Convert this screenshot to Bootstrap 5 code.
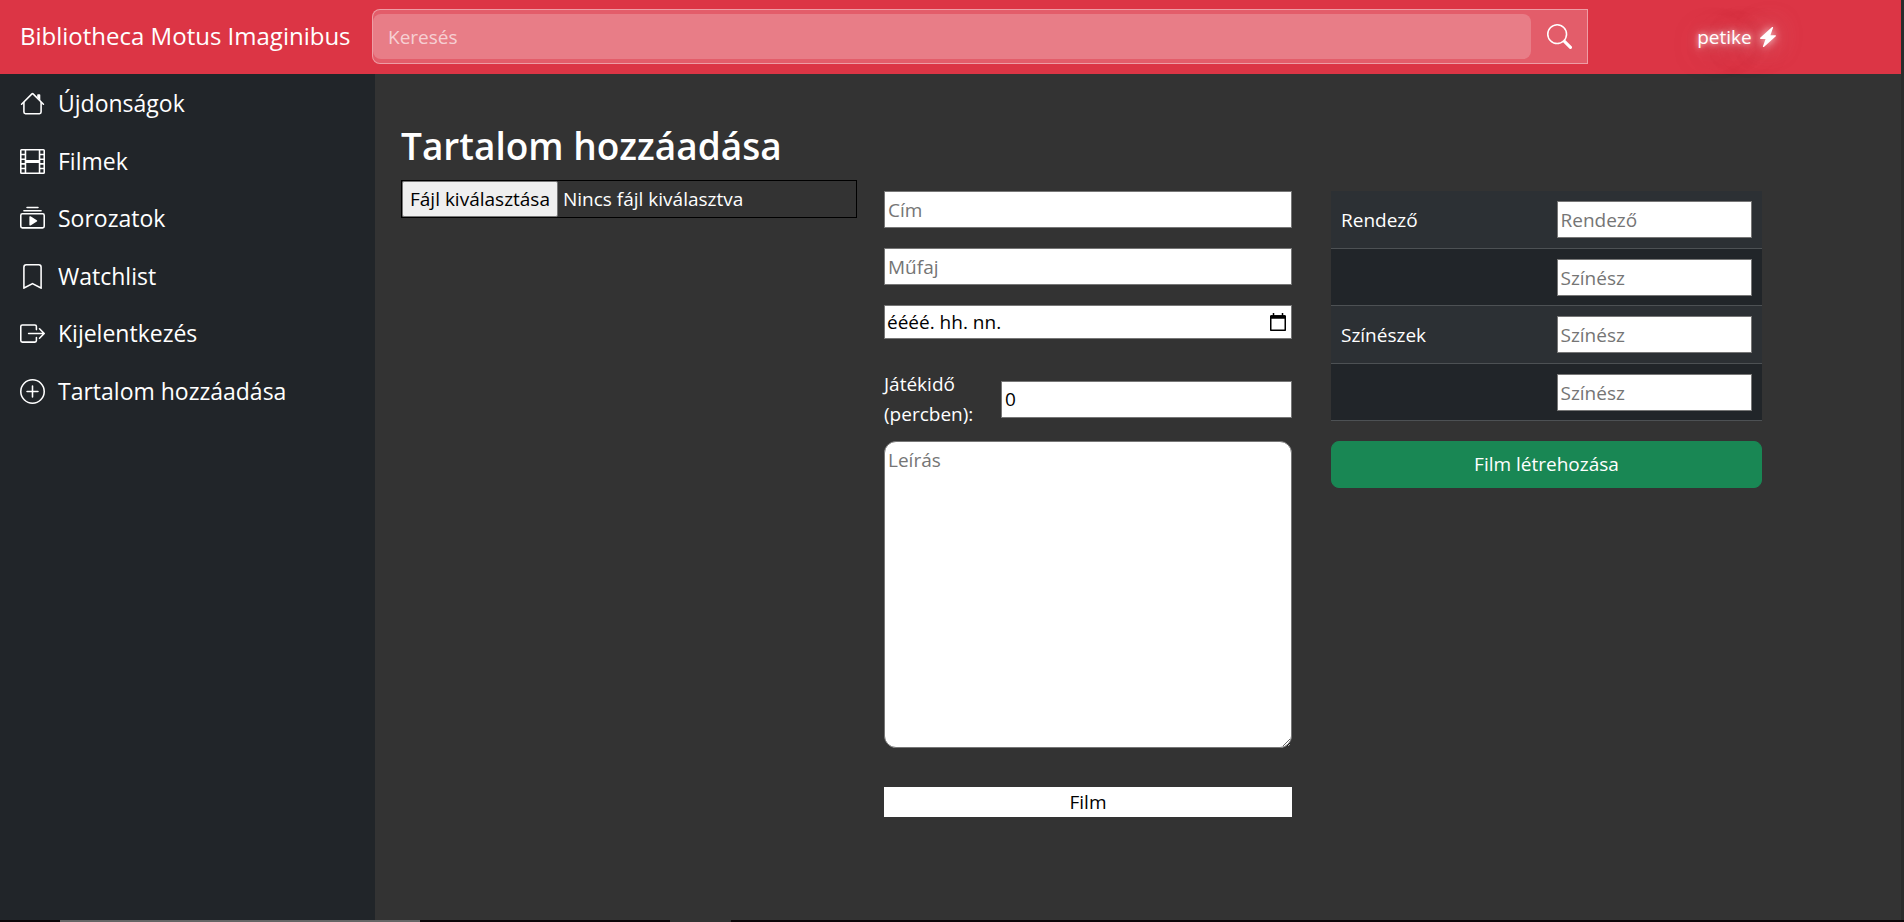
<!DOCTYPE html>
<html lang="hu">
<head>
<meta charset="utf-8">
<meta name="viewport" content="width=device-width, initial-scale=1">
<title>Bibliotheca Motus Imaginibus</title>
<link href="https://cdn.jsdelivr.net/npm/bootstrap@5.3.0/dist/css/bootstrap.min.css" rel="stylesheet">
<style>
  body { font-family: "Open Sans", "Noto Sans", sans-serif; font-size: 19px; line-height: 30px; color: #fff; background: #2b2b2b; }
  .page-shell { margin-right: 3px; background: #333; }
  .topbar { height: 74px; padding-bottom: 1px; background: #dc3545; position: relative; z-index: 2; }
  .brand-col { width: 372px; padding-left: 20px; flex: none; }
  .brand-link { font-size: 24px; color: #fff; text-decoration: none; white-space: nowrap; }
  .search-box { width: 1216px; height: 55px; padding: 4px 0; background: rgba(255,255,255,.2); border: 1px solid rgba(255,255,255,.4); border-radius: 8px 0 0 8px; flex: 0 1 auto; }
  .search-field { border: 0; border-radius: 8px; padding: 0 15px; color: #fff; background: rgba(255,255,255,.2); min-width: 0; }
  .search-field::placeholder { color: rgba(255,255,255,.65); opacity: 1; }
  .search-btn { width: 56px; border: 0; background: none; color: #fff; padding: 0; line-height: 1; }
  .user-col { padding-right: 16px; }
  .user-link { display: inline-flex; align-items: center; gap: 8px; color: #fff; text-decoration: none; text-shadow: 0 0 5px rgba(255,255,255,.7), 0 0 14px rgba(255,255,255,.6), 8px 4px 32px rgba(190,190,190,.5), 16px 16px 60px rgba(0,150,150,.3); }
  .user-link svg { filter: drop-shadow(0 0 4px rgba(255,255,255,.8)) drop-shadow(0 0 12px rgba(230,220,220,.5)); }
  .side-menu { width: 375px; flex: none; background: #212529; }
  .side-link { display: flex; align-items: center; gap: 13px; padding: 14px 20px; font-size: 23px; line-height: 30px; color: #fff; text-decoration: none; }
  .side-list li:nth-child(even) .side-link { padding-bottom: 13px; }
  .page-body { padding: 48px 139px 0 26px; }
  .page-title { font-size: 37px; font-weight: 600; line-height: 48px; margin: 0 0 10px; }
  .form-grid { display: grid; grid-template-columns: 456fr 435fr 470fr; }
  .col-mid { margin: 11px 0 0 27px; }
  .col-end { margin: 11px 0 0 39px; }
  .file-pick { height: 38px; border: 1px solid #000; cursor: pointer; }
  .file-btn { background: #efefef; color: #000; border: 1px solid #767676; border-radius: 2px; padding: 0 7px; line-height: 34px; margin-right: 5px; }
  .plain-field { display: block; width: 100%; height: 37px; border: 1px solid #767676; border-radius: 0; padding: 0 3px; background: #fff; color: #000; }
  .plain-field::placeholder { color: #757575; opacity: 1; }
  .field-stack { display: grid; gap: 20px; }
  .date-field { height: 34px; padding: 0 2px; }
  .date-field::placeholder { color: #000; }
  .date-btn { position: absolute; right: 5px; top: 7px; border: 0; background: none; padding: 0; line-height: 1; color: #000; }
  .length-row { display: grid; grid-template-columns: 117fr 291fr; align-items: center; margin: 30px 0 12px; }
  .story-field { height: 307px; border-radius: 12px; padding: 3px; }
  .kind-select { display: block; width: 100%; height: 30px; margin-top: 39px; border: 0; appearance: none; background: #fff; color: #000; text-align: center; padding: 0; }
  .cast-table { --bs-table-bg: #212529; --bs-table-striped-bg: #2c3034; margin-bottom: 20px; table-layout: fixed; color: #fff; }
  .cast-table td, .cast-table th { width: 50%; padding: 10px; font-weight: 400; vertical-align: middle; border-bottom: 1px solid #4d5154; }
  .cast-table tr:nth-child(even) > * { padding-bottom: 9px; }
  .create-btn { height: 47px; border-radius: 8px; font-size: 19px; padding: 0; }
  .edge-strip { height: 2px; margin-right: -3px; background: linear-gradient(90deg, #0b0508 60px, #666 60px 420px, #0b0508 420px 670px, #333 670px 731px, #0b0508 731px); }
</style>
</head>
<body>
<div class="page-shell d-flex flex-column min-vh-100">
  <header class="topbar d-flex align-items-center">
    <div class="brand-col"><a class="brand-link" href="#">Bibliotheca Motus Imaginibus</a></div>
    <form class="search-box d-flex" role="search">
      <input class="search-field flex-grow-1" type="search" placeholder="Keresés" aria-label="Keresés">
      <button class="search-btn" type="button" aria-label="Keresés indítása">
        <svg width="25" height="25" viewBox="0 0 16 16" fill="currentColor"><path d="M11.742 10.344a6.5 6.5 0 1 0-1.397 1.398h-.001c.03.04.062.078.098.115l3.85 3.85a1 1 0 0 0 1.415-1.414l-3.85-3.85a1.007 1.007 0 0 0-.115-.1zM12 6.5a5.5 5.5 0 1 1-11 0 5.5 5.5 0 0 1 11 0z"/></svg>
      </button>
    </form>
    <div class="user-col flex-grow-1 text-center">
      <a class="user-link" href="#">petike
        <svg width="16" height="20" viewBox="2.500 0 11 16" preserveAspectRatio="none" fill="currentColor" aria-hidden="true"><path d="M11.251.068a.5.5 0 0 1 .227.58L9.677 6.5H13a.5.5 0 0 1 .364.843l-8 8.5a.5.5 0 0 1-.842-.49L6.323 9.5H3a.5.5 0 0 1-.364-.843l8-8.5a.5.5 0 0 1 .615-.09z"/></svg></a>
    </div>
  </header>

  <div class="d-flex flex-grow-1">
    <nav class="side-menu">
      <ul class="side-list list-unstyled mb-0">
        <li><a class="side-link" href="#"><svg width="25" height="25" viewBox="0 0 16 16" fill="currentColor"><path fill-rule="evenodd" d="M2 13.5V7h1v6.5a.5.5 0 0 0 .5.5h9a.5.5 0 0 0 .5-.5V7h1v6.5a1.5 1.5 0 0 1-1.5 1.5h-9A1.5 1.5 0 0 1 2 13.5zm11-11V6l-2-2V2.5a.5.5 0 0 1 .5-.5h1a.5.5 0 0 1 .5.5z"/><path fill-rule="evenodd" d="M7.293 1.5a1 1 0 0 1 1.414 0l6.647 6.646a.5.5 0 0 1-.708.708L8 2.207 1.354 8.854a.5.5 0 1 1-.708-.708L7.293 1.5z"/></svg>Újdonságok</a></li>
        <li><a class="side-link" href="#"><svg width="25" height="25" viewBox="0 0 16 16" fill="currentColor"><path d="M0 1a1 1 0 0 1 1-1h14a1 1 0 0 1 1 1v14a1 1 0 0 1-1 1H1a1 1 0 0 1-1-1V1zm4 0v6h8V1H4zm8 8H4v6h8V9zM1 1v2h2V1H1zm2 3H1v2h2V4zM1 7v2h2V7H1zm2 3H1v2h2v-2zm-2 3v2h2v-2H1zM15 1h-2v2h2V1zm-2 3v2h2V4h-2zm2 3h-2v2h2V7zm-2 3v2h2v-2h-2zm2 3h-2v2h2v-2z"/></svg>Filmek</a></li>
        <li><a class="side-link" href="#"><svg width="25" height="25" viewBox="0 0 16 16" fill="currentColor"><path d="M2.5 3.5a.5.5 0 0 1 0-1h11a.5.5 0 0 1 0 1h-11zm2-2a.5.5 0 0 1 0-1h7a.5.5 0 0 1 0 1h-7zM0 13a1.5 1.5 0 0 0 1.5 1.5h13A1.5 1.5 0 0 0 16 13V6a1.5 1.5 0 0 0-1.5-1.5h-13A1.5 1.5 0 0 0 0 6v7zm1.5.5A.5.5 0 0 1 1 13V6a.5.5 0 0 1 .5-.5h13a.5.5 0 0 1 .5.5v7a.5.5 0 0 1-.5.5h-13z"/><path d="M6.258 6.563a.5.5 0 0 1 .507.013l4 2.5a.5.5 0 0 1 0 .848l-4 2.5A.5.5 0 0 1 6 12V7a.5.5 0 0 1 .258-.437z"/></svg>Sorozatok</a></li>
        <li><a class="side-link" href="#"><svg width="25" height="25" viewBox="0 0 16 16" fill="currentColor"><path d="M2 2a2 2 0 0 1 2-2h8a2 2 0 0 1 2 2v13.5a.5.5 0 0 1-.777.416L8 13.101l-5.223 2.815A.5.5 0 0 1 2 15.5V2zm2-1a1 1 0 0 0-1 1v12.566l4.723-2.482a.5.5 0 0 1 .554 0L13 14.566V2a1 1 0 0 0-1-1H4z"/></svg>Watchlist</a></li>
        <li><a class="side-link" href="#"><svg width="25" height="25" viewBox="0 0 16 16" fill="currentColor"><path fill-rule="evenodd" d="M10 12.5a.5.5 0 0 1-.5.5h-8a.5.5 0 0 1-.5-.5v-9a.5.5 0 0 1 .5-.5h8a.5.5 0 0 1 .5.5v2a.5.5 0 0 0 1 0v-2A1.5 1.5 0 0 0 9.5 2h-8A1.5 1.5 0 0 0 0 3.5v9A1.5 1.5 0 0 0 1.5 14h8a1.5 1.5 0 0 0 1.5-1.5v-2a.5.5 0 0 0-1 0v2z"/><path fill-rule="evenodd" d="M15.854 8.354a.5.5 0 0 0 0-.708l-3-3a.5.5 0 0 0-.708.708L14.293 7.5H5.5a.5.5 0 0 0 0 1h8.793l-2.147 2.146a.5.5 0 0 0 .708.708l3-3z"/></svg>Kijelentkezés</a></li>
        <li><a class="side-link" href="#"><svg width="25" height="25" viewBox="0 0 16 16" fill="currentColor"><path d="M8 15A7 7 0 1 1 8 1a7 7 0 0 1 0 14zm0 1A8 8 0 1 0 8 0a8 8 0 0 0 0 16z"/><path d="M8 4a.5.5 0 0 1 .5.5v3h3a.5.5 0 0 1 0 1h-3v3a.5.5 0 0 1-1 0v-3h-3a.5.5 0 0 1 0-1h3v-3A.5.5 0 0 1 8 4z"/></svg>Tartalom hozzáadása</a></li>
      </ul>
    </nav>

    <main class="page-body flex-grow-1">
      <h1 class="page-title">Tartalom hozzáadása</h1>
      <form class="form-grid">
        <div>
          <label class="file-pick d-flex align-items-center position-relative"><input class="visually-hidden" type="file"><span class="file-btn">Fájl kiválasztása</span><span>Nincs fájl kiválasztva</span></label>
        </div>
        <div class="col-mid">
          <div class="field-stack">
            <input class="plain-field" type="text" placeholder="Cím" aria-label="Cím">
            <input class="plain-field" type="text" placeholder="Műfaj" aria-label="Műfaj">
            <div class="position-relative">
              <input class="plain-field date-field" type="text" placeholder="éééé. hh. nn." aria-label="Megjelenés dátuma">
              <button class="date-btn" type="button" aria-label="Naptár megnyitása"><svg width="18" height="19" viewBox="0 0 18 19" fill="none" stroke="currentColor" stroke-width="1.5"><path d="M1.75 3h14.5v14.25H1.750z" stroke-linejoin="round"/><path d="M2 4h14" stroke-width="3.5"/><path d="M4.5 0v4M13.5 0v4"/></svg></button>
            </div>
          </div>
          <div class="length-row">
            <label for="hossz">Játékidő<br>(percben):</label>
            <input class="plain-field" id="hossz" type="number" value="0">
          </div>
          <textarea class="plain-field story-field" placeholder="Leírás" aria-label="Leírás"></textarea>
          <select class="kind-select" aria-label="Típus"><option>Film</option><option>Sorozat</option></select>
        </div>
        <div class="col-end">
          <table class="cast-table table table-dark table-striped">
            <tbody>
              <tr><th scope="row">Rendező</th><td><input class="plain-field" type="text" placeholder="Rendező" aria-label="Rendező"></td></tr>
              <tr><th></th><td><input class="plain-field" type="text" placeholder="Színész" aria-label="Első színész"></td></tr>
              <tr><th scope="row">Színészek</th><td><input class="plain-field" type="text" placeholder="Színész" aria-label="Második színész"></td></tr>
              <tr><th></th><td><input class="plain-field" type="text" placeholder="Színész" aria-label="Harmadik színész"></td></tr>
            </tbody>
          </table>
          <button class="create-btn btn btn-success w-100" type="button">Film létrehozása</button>
        </div>
      </form>
    </main>
  </div>
  <div class="edge-strip"></div>
</div>
<script src="https://cdn.jsdelivr.net/npm/bootstrap@5.3.0/dist/js/bootstrap.bundle.min.js"></script>
</body>
</html>
